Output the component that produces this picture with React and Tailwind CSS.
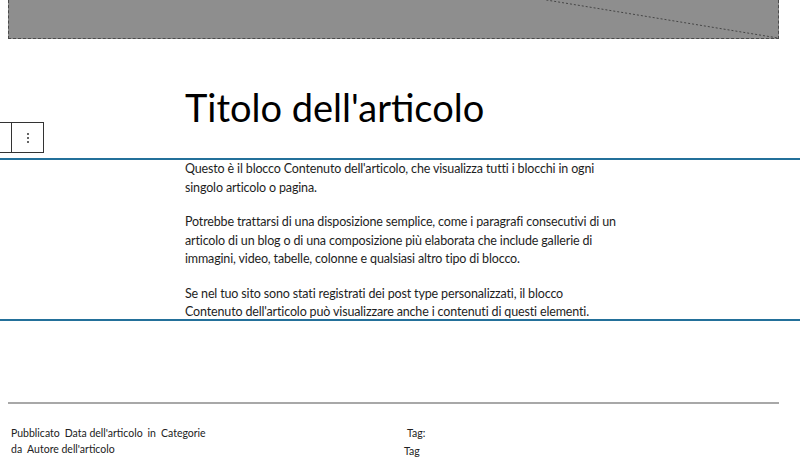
const App = () => {
  return (
    <div className="relative min-h-[472px] w-[800px] overflow-hidden bg-white text-black" style={{ fontFamily: 'Lato, "Open Sans", sans-serif' }}>
      {/* Featured image placeholder (scrolled, only bottom visible) */}
      <div className="ml-2 w-[771px] h-[39px] relative bg-[#8e8e8e] border-x border-b border-dashed border-[#4a4a4a]">
        <svg className="absolute inset-0 h-full w-full" viewBox="0 0 770 39" preserveAspectRatio="none">
          <line x1="538" y1="0" x2="770" y2="39" stroke="#444" strokeWidth="1" strokeDasharray="2 2" />
        </svg>
      </div>

      {/* Title */}
      <div className="ml-[185px] pt-[44px]">
        <h1 className="text-[38px] leading-[48px] font-normal">Titolo dell'articolo</h1>
      </div>

      {/* Block toolbar */}
      <div className="absolute left-[-20px] top-[122px] flex h-[31px] border border-[#333] bg-white">
        <div className="w-[31px] border-r border-[#333]" />
        <div className="flex w-[31px] items-center justify-center">
          <svg width="4" height="12" viewBox="0 0 4 12">
            <circle cx="2" cy="2" r="1" fill="#333" />
            <circle cx="2" cy="6" r="1" fill="#333" />
            <circle cx="2" cy="10" r="1" fill="#333" />
          </svg>
        </div>
      </div>

      {/* Post content block */}
      <div className="mt-[27px] border-y-2 border-[#23709a]">
        <div className="ml-[185px] w-[434px] text-[12.5px] leading-[18.5px] tracking-[-0.15px] text-[#1e1e1e]">
          <p>Questo è il blocco Contenuto dell'articolo, che visualizza tutti i blocchi in ogni singolo articolo o pagina.</p>
          <p className="mt-[16px]">Potrebbe trattarsi di una disposizione semplice, come i paragrafi consecutivi di un articolo di un blog o di una composizione più elaborata che include gallerie di immagini, video, tabelle, colonne e qualsiasi altro tipo di blocco.</p>
          <p className="mt-[16px] mb-[-3px]">Se nel tuo sito sono stati registrati dei post type personalizzati, il blocco Contenuto dell'articolo può visualizzare anche i contenuti di questi elementi.</p>
        </div>
      </div>

      {/* Separator */}
      <div className="ml-2 w-[771px] mt-[81px] h-[2px] bg-[#a8a8a8]" />

      {/* Post meta */}
      <div className="flex pl-[11px] pt-[21px] text-[10.5px] leading-[16px] text-[#222]">
        <div className="w-[393px]">
          <div className="flex gap-[5px]">
            <span>Pubblicato</span>
            <span>Data dell'articolo</span>
            <span>in</span>
            <span>Categorie</span>
          </div>
          <div className="flex gap-[5px]">
            <span>da</span>
            <span>Autore dell'articolo</span>
          </div>
        </div>
        <div>
          <div className="pl-[3px]">Tag:</div>
          <div className="mt-[2px]">Tag</div>
        </div>
      </div>
    </div>
  );
};

export default App;
